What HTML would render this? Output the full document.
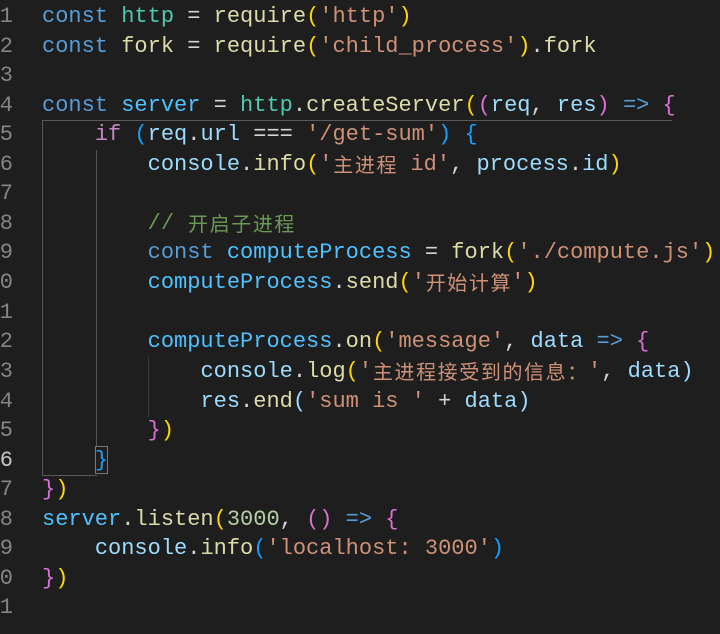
<!DOCTYPE html>
<html><head><meta charset="utf-8"><style>
html,body{margin:0;padding:0;background:#1e1e1e;width:720px;height:634px;overflow:hidden}
.l{position:absolute;left:42px;height:30px;line-height:30px;font-family:"Liberation Mono","Noto Sans CJK SC",monospace;font-size:22px;white-space:pre;color:#d4d4d4}
.n{position:absolute;right:707px;height:30px;line-height:30px;font-family:"Liberation Mono",monospace;font-size:22px;color:#858585;text-align:right}
.c{display:inline-block;width:21.6px;height:30px;line-height:27px;vertical-align:top;text-align:center;font-family:"Noto Sans CJK SC",sans-serif;font-size:20px;overflow:hidden}
.k{color:#569cd6}.t{color:#4ec9b0}.f{color:#dcdcaa}.s{color:#ce9178}.v{color:#9cdcfe}.vc{color:#4fc1ff}
.p{color:#c586c0}.cm{color:#6a9955}.y{color:#ffd700}.o{color:#da70d6}.b{color:#179fff}
.g{position:absolute;background:#4a4a4a}
</style></head><body>
<div class="g" style="left:42px;top:120px;width:1px;height:356px;background:#5a5a5a"></div>
<div class="g" style="left:42px;top:120px;width:630px;height:1px;background:#5a5a5a"></div>
<div class="g" style="left:42px;top:475px;width:55px;height:1px;background:#5a5a5a"></div>
<div class="g" style="left:96px;top:150px;width:1px;height:297px;background:#555"></div>
<div class="g" style="left:148px;top:357px;width:1px;height:60px;background:#3a3a3a"></div>
<div style="position:absolute;left:95px;top:446px;width:13px;height:28px;border:1px solid #777;box-sizing:border-box"></div>
<div class="n" style="top:2px">1</div><div class="n" style="top:32px">2</div><div class="n" style="top:61px">3</div><div class="n" style="top:91px">4</div><div class="n" style="top:120px">5</div><div class="n" style="top:150px">6</div><div class="n" style="top:179px">7</div><div class="n" style="top:209px">8</div><div class="n" style="top:238px">9</div><div class="n" style="top:268px">0</div><div class="n" style="top:298px">1</div><div class="n" style="top:327px">2</div><div class="n" style="top:357px">3</div><div class="n" style="top:387px">4</div><div class="n" style="top:416px">5</div><div class="n" style="top:446px;color:#c6c6c6">6</div><div class="n" style="top:475px">7</div><div class="n" style="top:505px">8</div><div class="n" style="top:534px">9</div><div class="n" style="top:564px">0</div><div class="n" style="top:593px">1</div>
<div class="l" style="top:2px"><span class="k">const</span> <span class="t">http</span> = <span class="f">require</span><span class="y">(</span><span class="s">'http'</span><span class="y">)</span></div>
<div class="l" style="top:32px"><span class="k">const</span> <span class="f">fork</span> = <span class="f">require</span><span class="y">(</span><span class="s">'child_process'</span><span class="y">)</span>.<span class="f">fork</span></div>
<div class="l" style="top:91px"><span class="k">const</span> <span class="vc">server</span> = <span class="t">http</span>.<span class="f">createServer</span><span class="y">(</span><span class="o">(</span><span class="v">req</span>, <span class="v">res</span><span class="o">)</span> <span class="k">=&gt;</span> <span class="o">{</span></div>
<div class="l" style="top:120px">    <span class="p">if</span> <span class="b">(</span><span class="v">req</span>.<span class="v">url</span> === <span class="s">'/get-sum'</span><span class="b">)</span> <span class="b">{</span></div>
<div class="l" style="top:150px">        <span class="v">console</span>.<span class="f">info</span><span class="y">(</span><span class="s">'<span class="c">主</span><span class="c">进</span><span class="c">程</span> id'</span>, <span class="v">process</span>.<span class="v">id</span><span class="y">)</span></div>
<div class="l" style="top:209px">        <span class="cm">// <span class="c">开</span><span class="c">启</span><span class="c">子</span><span class="c">进</span><span class="c">程</span></span></div>
<div class="l" style="top:238px">        <span class="k">const</span> <span class="vc">computeProcess</span> = <span class="f">fork</span><span class="y">(</span><span class="s">'./compute.js'</span><span class="y">)</span></div>
<div class="l" style="top:268px">        <span class="vc">computeProcess</span>.<span class="f">send</span><span class="y">(</span><span class="s">'<span class="c">开</span><span class="c">始</span><span class="c">计</span><span class="c">算</span>'</span><span class="y">)</span></div>
<div class="l" style="top:327px">        <span class="vc">computeProcess</span>.<span class="f">on</span><span class="y">(</span><span class="s">'message'</span>, <span class="v">data</span> <span class="k">=&gt;</span> <span class="o">{</span></div>
<div class="l" style="top:357px">            <span class="v">console</span>.<span class="f">log</span><span class="y">(</span><span class="s">'<span class="c">主</span><span class="c">进</span><span class="c">程</span><span class="c">接</span><span class="c">受</span><span class="c">到</span><span class="c">的</span><span class="c">信</span><span class="c">息</span><span class="c">：</span>'</span>, <span class="v">data</span><span class="v">)</span></div>
<div class="l" style="top:387px">            <span class="v">res</span>.<span class="f">end</span><span class="v">(</span><span class="s">'sum is '</span> + <span class="v">data</span><span class="v">)</span></div>
<div class="l" style="top:416px">        <span class="o">}</span><span class="y">)</span></div>
<div class="l" style="top:446px">    <span class="b">}</span></div>
<div class="l" style="top:475px"><span class="o">}</span><span class="y">)</span></div>
<div class="l" style="top:505px"><span class="vc">server</span>.<span class="f">listen</span><span class="y">(</span><span style="color:#b5cea8">3000</span>, <span class="o">()</span> <span class="k">=&gt;</span> <span class="o">{</span></div>
<div class="l" style="top:534px">    <span class="v">console</span>.<span class="f">info</span><span class="b">(</span><span class="s">'localhost: 3000'</span><span class="b">)</span></div>
<div class="l" style="top:564px"><span class="o">}</span><span class="y">)</span></div>
</body></html>
